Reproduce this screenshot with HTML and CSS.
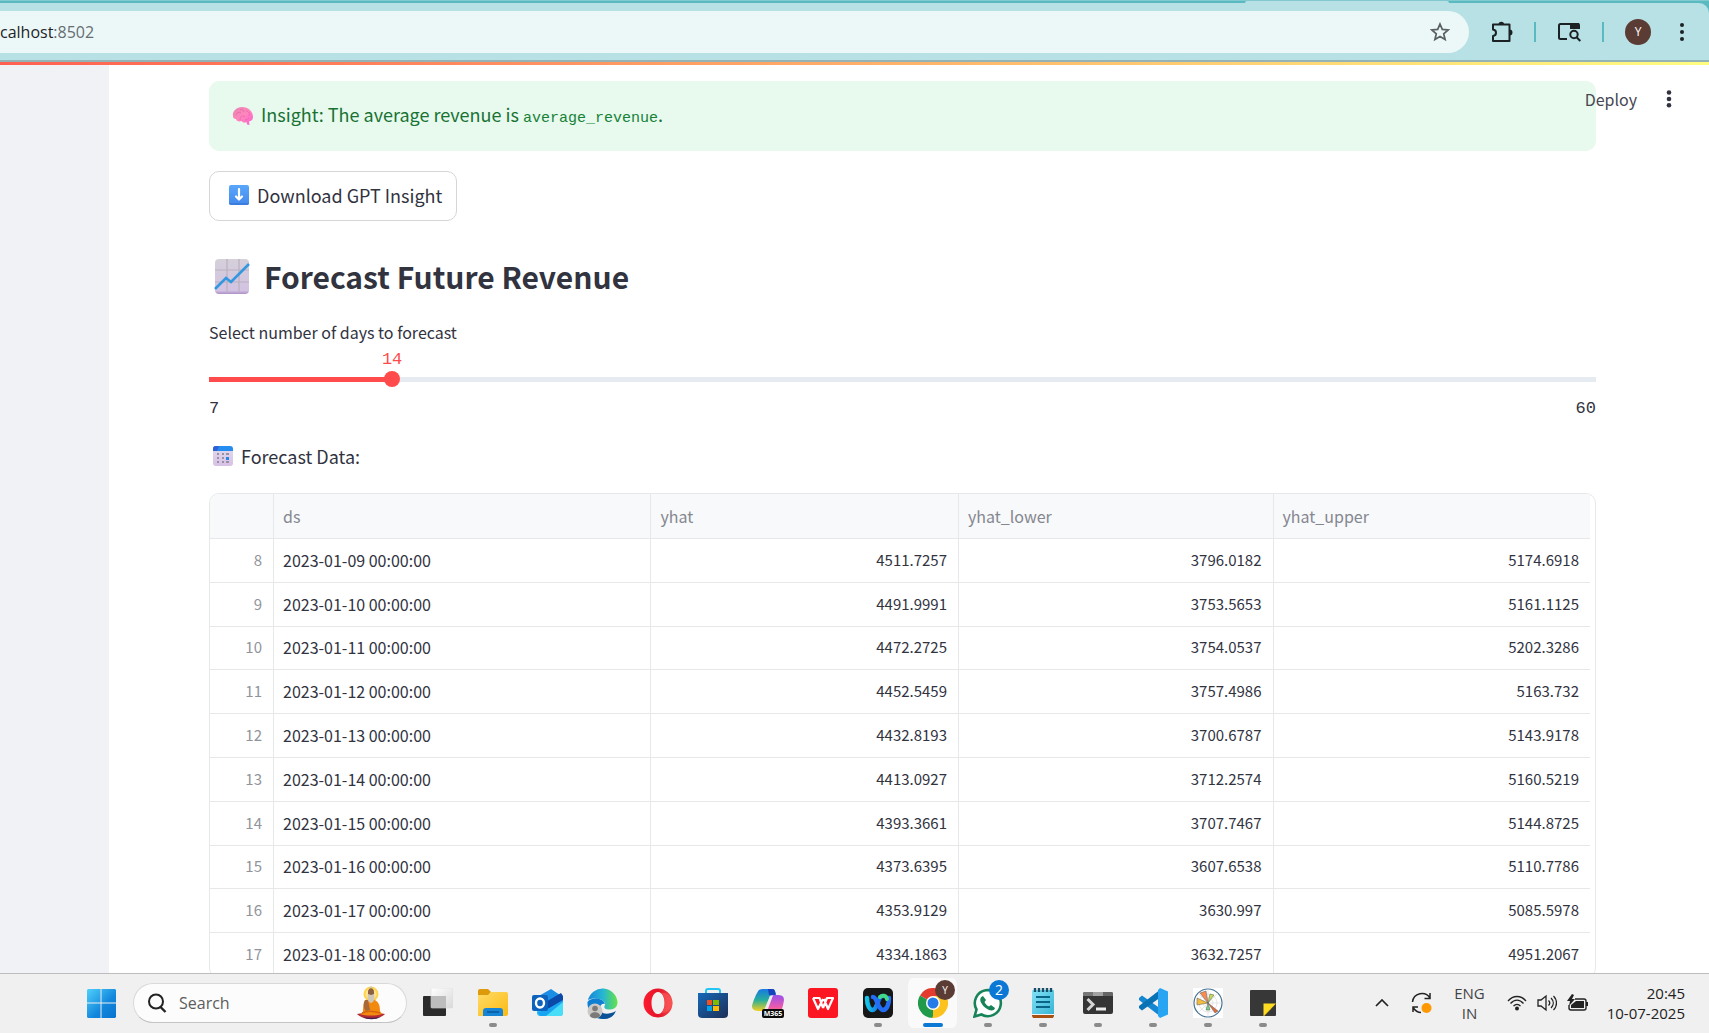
FILE: index.html
```html
<!DOCTYPE html>
<html lang="en">
<head>
<meta charset="utf-8">
<title>Forecast Future Revenue</title>
<link rel="stylesheet" href="styles.css">
</head>
<body>
<div class="screen">
  <header class="browser">
    <div class="tab-edge"><div class="active-tab"></div></div>
    <div class="toolbar">
      <div class="omnibox">
        <span class="url">calhost<span class="port">:8502</span></span>
        <button class="icon-button" aria-label="Bookmark this page"><svg width="20" height="20" viewBox="0 0 20 20"><path d="M10 2l2.3 5.4 5.9.5-4.500 3.900 1.400 5.700-5.100-3.100-5.100 3.100 1.400-5.700-4.500-3.900 5.900-.5z" fill="none" stroke="#5b6062" stroke-width="1.700"/></svg></button>
      </div>
      <button class="icon-button ext" aria-label="Extensions"><svg width="22" height="22" viewBox="0 0 22 22"><path d="M2 3.500h16.500v16.500H2v-5c4-.5 4-6 0-6.500z" fill="none" stroke="#1c2224" stroke-width="2" stroke-linejoin="round"/><path d="M7.500 3.500a2.800 2.800 0 0 1 5.600 0zM18.500 8.500a2.800 2.800 0 0 1 0 6z" fill="#1c2224"/></svg></button>
      <span class="divider"></span>
      <button class="icon-button" aria-label="Search tabs"><svg width="24" height="24" viewBox="0 0 24 24"><path d="M10 19H3.500A1.500 1.500 0 0 1 2 17.500v-12A1.500 1.500 0 0 1 3.500 4H21v5" fill="none" stroke="#1c2224" stroke-width="2"/><path d="M13 3h8a2 2 0 0 1 2 2v4H13z" fill="#1c2224"/><circle cx="17" cy="14.500" r="3.700" fill="#b7e1e4" stroke="#1c2224" stroke-width="2"/><path d="M19.600 17.200l3.700 3.800" stroke="#1c2224" stroke-width="2"/></svg></button>
      <span class="divider"></span>
      <button class="avatar" aria-label="Profile">Y</button>
      <button class="icon-button" aria-label="Browser menu"><svg width="8" height="22" viewBox="0 0 8 22"><g fill="#1c2224"><circle cx="4" cy="4" r="2"/><circle cx="4" cy="11" r="2"/><circle cx="4" cy="18" r="2"/></g></svg></button>
    </div>
  </header>

  <div class="app">
    <aside class="sidebar"></aside>
    <div class="decoration"></div>
    <div class="app-menu">
      <button class="deploy">Deploy</button>
      <button class="icon-button" aria-label="App menu"><svg width="8" height="20" viewBox="0 0 8 20"><g fill="#31333f"><circle cx="4" cy="3.500" r="2.300"/><circle cx="4" cy="10" r="2.300"/><circle cx="4" cy="16.300" r="2.300"/></g></svg></button>
    </div>
    <main class="content">
      <div class="alert">
        <svg width="22" height="20" viewBox="0 0 22 20"><defs><linearGradient id="brain" x1="0" x2="1" y1="0" y2="1"><stop offset="0" stop-color="#e884b0"/><stop offset=".5" stop-color="#ff86bd"/><stop offset="1" stop-color="#ff5fd0"/></linearGradient></defs><path d="M1 10C0 5 5 1 10 1c6 0 11 4 11 10 0 3-2 4-4 4.500L17.500 19 15 18.500 14.500 16c-2 1-4 .5-5-1-3 1-5 0-5.500-2C2 13 1 12 1 10z" fill="url(#brain)"/><path d="M4 9c1-3 4-3 5-2M8 4c2-1 4 0 4 2M8 14c0-4 3-5 5-3m1-6c3 0 4 3 3 5m-4 4c2 0 3-1 4-2" fill="none" stroke="#e565a6" stroke-width=".8"/></svg>
        <p>Insight: The average revenue is <code>average_revenue</code>.</p>
      </div>
      <button class="download">
        <svg width="20" height="20" viewBox="0 0 20 20"><defs><linearGradient id="dl" x2="0" y2="1"><stop offset="0" stop-color="#59a7fb"/><stop offset="1" stop-color="#4389ec"/></linearGradient></defs><rect width="20" height="20" rx="2" fill="url(#dl)"/><path d="M0 18h20a2 2 0 0 1-2 2H2a2 2 0 0 1-2-2z" fill="#3877d5" opacity=".7"/><path d="M10 4v10M7 11.500l3 3 3-3" fill="none" stroke="#fff" stroke-width="2.200" stroke-linecap="round" stroke-linejoin="round"/></svg>
        Download GPT Insight
      </button>
      <h2 class="title">
        <svg width="36" height="36" viewBox="0 0 36 36"><defs><linearGradient id="ch" x2="0" y2="1"><stop offset="0" stop-color="#d5d0da"/><stop offset=".9" stop-color="#d3c3e2"/><stop offset="1" stop-color="#ae90c8"/></linearGradient></defs><rect x="1" y="1" width="34" height="35" rx="4" fill="url(#ch)"/><path d="M13 1v34M25 1v34M1 12h34M1 24h34" stroke="#b9b0c0" stroke-width="1.200"/><path d="M1 31l11-11 5 4L35 6" fill="none" stroke="#3398df" stroke-width="2.600"/></svg>
        Forecast Future Revenue
      </h2>
      <label class="slider-label" for="days">Select number of days to forecast</label>
      <div class="slider">
        <div class="value-rail"><output class="value" for="days" style="left:13.2%">14</output></div>
        <input class="range" id="days" type="range" min="7" max="60" value="14">
        <div class="ticks"><span>7</span><span>60</span></div>
      </div>
      <p class="caption">
        <svg width="20" height="20" viewBox="0 0 20 20"><defs><linearGradient id="cal" x2="0" y2="1"><stop offset="0" stop-color="#e2dcec"/><stop offset="1" stop-color="#d8c0e6"/></linearGradient></defs><rect width="20" height="20" rx="3" fill="url(#cal)"/><path d="M0 5V3a3 3 0 0 1 3-3h14a3 3 0 0 1 3 3v2z" fill="#258cf0"/><path d="M0 5V3a3 3 0 0 1 3-3h3L4 5z" fill="#315fd6"/><g fill="#9a90a6"><path d="M4 7h2v2H4zM9 7h2v2H9zM13 7h3v2h-3zM4 11h2v2H4zM9 11h2v2H9zM4 15h2v2H4zM9 15h2v2H9zM13 15h3v2h-3z"/></g><path d="M13 11h3v3h-3z" fill="#2387ea"/></svg>
        Forecast Data:
      </p>
      <div class="grid">
        <table>
          <colgroup><col class="c-index"><col class="c-ds"><col class="c-yhat"><col class="c-lower"><col class="c-upper"></colgroup>
          <thead><tr><th></th><th>ds</th><th>yhat</th><th>yhat_lower</th><th>yhat_upper</th></tr></thead>
          <tbody>
            <tr><td>8</td><td>2023-01-09 00:00:00</td><td>4511.7257</td><td>3796.0182</td><td>5174.6918</td></tr>
            <tr><td>9</td><td>2023-01-10 00:00:00</td><td>4491.9991</td><td>3753.5653</td><td>5161.1125</td></tr>
            <tr><td>10</td><td>2023-01-11 00:00:00</td><td>4472.2725</td><td>3754.0537</td><td>5202.3286</td></tr>
            <tr><td>11</td><td>2023-01-12 00:00:00</td><td>4452.5459</td><td>3757.4986</td><td>5163.732</td></tr>
            <tr><td>12</td><td>2023-01-13 00:00:00</td><td>4432.8193</td><td>3700.6787</td><td>5143.9178</td></tr>
            <tr><td>13</td><td>2023-01-14 00:00:00</td><td>4413.0927</td><td>3712.2574</td><td>5160.5219</td></tr>
            <tr><td>14</td><td>2023-01-15 00:00:00</td><td>4393.3661</td><td>3707.7467</td><td>5144.8725</td></tr>
            <tr><td>15</td><td>2023-01-16 00:00:00</td><td>4373.6395</td><td>3607.6538</td><td>5110.7786</td></tr>
            <tr><td>16</td><td>2023-01-17 00:00:00</td><td>4353.9129</td><td>3630.997</td><td>5085.5978</td></tr>
            <tr><td>17</td><td>2023-01-18 00:00:00</td><td>4334.1863</td><td>3632.7257</td><td>4951.2067</td></tr>
          </tbody>
        </table>
      </div>
    </main>
  </div>

  <footer class="taskbar">
    <button class="start" aria-label="Start"><svg width="29" height="29" viewBox="0 0 30 30"><defs><linearGradient id="win" x2="1" y2="1"><stop offset="0" stop-color="#4fd0fb"/><stop offset=".6" stop-color="#1286dc"/><stop offset="1" stop-color="#0873cf"/></linearGradient></defs><path d="M1 0h13v14H0V1zM15 0h14l1 1v13H15zM0 15h14v15H1l-1-1zM15 15h15v14l-1 1H15z" fill="url(#win)"/></svg></button>
    <div class="search">
      <svg width="20" height="20" viewBox="0 0 20 20"><circle cx="9" cy="8.500" r="7" fill="none" stroke="#222" stroke-width="2"/><path d="M13.500 14l5 5" stroke="#222" stroke-width="2.400"/></svg>
      <input type="text" placeholder="Search" aria-label="Search">
      <svg width="30" height="34" viewBox="0 0 30 34"><circle cx="15" cy="8" r="7.500" fill="#ffd34d"/><circle cx="15" cy="8" r="5.500" fill="#ffe58c"/><path d="M1 28c4-1 8-1 14-1s10 0 14 1c-3 3-8 5-14 5S4 31 1 28z" fill="#b52b35"/><path d="M7 31c4 1 12 1 17 0-4 3-13 3-17 0z" fill="#402050"/><path d="M7 27c0-9 1-13 8-14 7 1 9 5 9 12l2 3c-6 2-16 2-22 0z" fill="#f38a10"/><path d="M9 14c-2 3-2 8 1 11l4-1-2-10z" fill="#a8693a"/><path d="M12 6c0-5 6-5 6 0v4l-1 2h-4l-1-2z" fill="#8e6043"/><path d="M12 8l3 1 3-1c1 5 0 8-3 9-3-1-4-4-3-9zM13 2c1-2 3-2 4 0z" fill="#cfc8b8"/><path d="M6 27c6-3 12-2 18 0" fill="none" stroke="#d8650a" stroke-width="1.500"/></svg>
    </div>
    <nav class="apps" aria-label="Pinned apps">
      <button aria-label="Task view"><svg width="30" height="30" viewBox="0 0 30 30"><defs><linearGradient id="tv" x2="1" y2="1"><stop offset="0" stop-color="#fff"/><stop offset="1" stop-color="#d9d9d9"/></linearGradient></defs><rect x="0" y="8" width="23" height="20" rx="1" fill="#2b2b2b"/><rect x="8" y="0" width="22" height="20" rx="1" fill="url(#tv)" stroke="#ddd" stroke-width=".6"/><path d="M8 8h15v12H8z" fill="#bdbdbd"/></svg></button>
      <button class="running" aria-label="File Explorer"><svg width="30" height="30" viewBox="0 0 30 30"><defs><linearGradient id="fo" x2="1" y2="1"><stop offset="0" stop-color="#ffdc67"/><stop offset="1" stop-color="#fbb914"/></linearGradient></defs><path d="M0 3a2 2 0 0 1 2-2h8l3 3-3 4H0z" fill="#dd9b0c"/><path d="M0 7h10l3-3h15a2 2 0 0 1 2 2v20a2 2 0 0 1-2 2H0z" fill="url(#fo)"/><path d="M5 28v-5a3 3 0 0 1 3-3h14a3 3 0 0 1 3 3v5z" fill="#1684d5"/><path d="M9 24h12" stroke="#0a579b" stroke-width="1.500"/></svg></button>
      <button aria-label="Outlook"><svg width="32" height="30" viewBox="0 0 32 30"><path d="M5 9L19 1l12 8-14 12z" fill="#1a8ee5"/><path d="M31 8v17a3 3 0 0 1-3 3H8a3 3 0 0 1-3-3v-4z" fill="#3ec7f6"/><path d="M12 15L29 5l2 3v5L14 22z" fill="#0b4aa8"/><path d="M31 12v5L14 28H8l-3-4 9-2z" fill="#18a4f0"/><path d="M31 14v11a3 3 0 0 1-3 3H14z" fill="#4addf8"/><rect x="0" y="7" width="16" height="16" rx="2" fill="#0c62bd"/><ellipse cx="8" cy="15" rx="4" ry="4.500" fill="none" stroke="#fff" stroke-width="2.400"/></svg></button>
      <button aria-label="Edge"><svg width="31" height="31" viewBox="0 0 31 31"><defs><linearGradient id="ed"><stop offset="0" stop-color="#1687d9"/><stop offset=".5" stop-color="#25b5d5"/><stop offset="1" stop-color="#65e344"/></linearGradient></defs><path d="M1 12A15 15 0 0 1 30.500 14c0 6-4 7.500-9 7.500-4 0-5-2-3.500-4.500 1-4-7-9-17-5z" fill="url(#ed)"/><path d="M.5 14C3 9 16 9 18 16c-6-2-7 8 1 11 3 1 6 .5 9-2-3 5-8 6-12.500 6C6 31 0 23 .5 14z" fill="#0e7fd2"/><path d="M12 16c-3 8 6 13 17 7-4 8-11 9-17 7-5-3-5-11 0-14z" fill="#0c5196"/><circle cx="8" cy="23" r="7.500" fill="#cbc9c7"/><circle cx="8" cy="20.500" r="2.800" fill="#7c7a78"/><path d="M3 28c0-5 10-5 10 0-2 3-8 3-10 0z" fill="#7c7a78"/></svg></button>
      <button aria-label="Opera"><svg width="30" height="30" viewBox="0 0 30 30"><defs><linearGradient id="op"><stop offset="0" stop-color="#ff1b2d"/><stop offset=".5" stop-color="#e4132a"/><stop offset="1" stop-color="#f14848"/></linearGradient></defs><path fill="url(#op)" fill-rule="evenodd" d="M15 .5a14.500 14.500 0 1 0 0 29 14.500 14.500 0 0 0 0-29zm0 3.500c4 0 6.500 5 6.500 11S19 26 15 26 8.500 21 8.500 15 11 4 15 4z"/><path d="M18 5c5 3 5 17 0 20 6 1 11-5 11.500-10C29 9 24 4 18 5z" fill="#ff6060" opacity=".55"/></svg></button>
      <button aria-label="Microsoft Store"><svg width="30" height="30" viewBox="0 0 30 30"><defs><linearGradient id="st" x2="1" y2="1"><stop offset="0" stop-color="#1569b8"/><stop offset="1" stop-color="#1d2f57"/></linearGradient></defs><path d="M8 6V3a2 2 0 0 1 2-2h10a2 2 0 0 1 2 2v3" fill="none" stroke="#22c5f4" stroke-width="2"/><path d="M0 5h30v21a4 4 0 0 1-4 4H4a4 4 0 0 1-4-4z" fill="url(#st)"/><path d="M9 12h5v5H9z" fill="#f25022"/><path d="M15 12h6v5h-6z" fill="#7fba00"/><path d="M9 18h5v5H9z" fill="#00a4ef"/><path d="M15 18h6v5h-6z" fill="#ffb900"/></svg></button>
      <button aria-label="Microsoft 365 Copilot"><svg width="32" height="30" viewBox="0 0 32 30"><defs><linearGradient id="m1" x2="0" y2="1"><stop offset="0" stop-color="#1978e5"/><stop offset=".5" stop-color="#26ae9c"/><stop offset="1" stop-color="#f5cf1e"/></linearGradient><linearGradient id="m2" x2="0" y2="1"><stop offset="0" stop-color="#9950ed"/><stop offset=".6" stop-color="#ef5ba8"/><stop offset="1" stop-color="#ffa34c"/></linearGradient></defs><path d="M7 2c1-1 3-1 5-1h8c3 0 3 2 4 5l-6 2-5 12c-1 3-3 3-5 3-5 0-8-1-8-5C1 13 5 4 7 2z" fill="url(#m1)"/><path d="M16 1h4c3 0 3 3 4 6h-7z" fill="#1742bd"/><path d="M19 8c1-1 3-1 5-1 6 0 8 1 8 5-1 7-3 14-7 16H13c3-5 4-16 6-20z" fill="url(#m2)"/><path d="M18 8l3-.5-6 16-3 .5z" fill="#efe8ef"/><rect x="10" y="21" width="22" height="9" rx="2" fill="#0a0a0a"/><text x="21" y="28" text-anchor="middle" class="m365">M365</text></svg></button>
      <button aria-label="WPS Office"><svg width="30" height="30" viewBox="0 0 30 30"><rect width="30" height="30" rx="3" fill="#fc1622"/><path d="M5 10h6.500l3.500 10M5 10l5 11 5-10M15 20l4-10h6L20 21l-4-10" fill="none" stroke="#fff" stroke-width="2.200" stroke-linejoin="round"/></svg></button>
      <button class="running" aria-label="Webex"><svg width="30" height="30" viewBox="0 0 30 30"><defs><linearGradient id="wx"><stop offset="0" stop-color="#14c5e8"/><stop offset="1" stop-color="#1757ec"/></linearGradient></defs><rect width="30" height="30" rx="5" fill="#171717"/><path d="M4 10c0 8 3 12 5.500 12S14 17 15 14s3-6 5-6" fill="none" stroke="url(#wx)" stroke-width="4.500" stroke-linecap="round"/><path d="M10 9c4 0 5 13 10 13 4 0 6-6 6-12" fill="none" stroke="#236cf4" stroke-width="4.500" stroke-linecap="round"/><path d="M17 9c2-2 6-2 7 2" fill="none" stroke="#41d889" stroke-width="4" stroke-linecap="round"/></svg></button>
      <button class="running active" aria-label="Chrome"><svg width="30" height="30" viewBox="0 0 30 30"><path d="M15 15L2 7.500A15 15 0 0 1 28 7.500z" fill="#e33b2e"/><path d="M15 15L28 7.500A15 15 0 0 1 15 30z" fill="#fcc31e"/><path d="M15 15l0 15A15 15 0 0 1 2 7.500z" fill="#219b4b"/><path d="M15 8h13L21 19l-6 11h-1l4-8z" fill="#fcc31e"/><circle cx="15" cy="15" r="7" fill="#fff"/><circle cx="15" cy="15" r="5.500" fill="#267be9"/></svg><span class="badge brown">Y</span></button>
      <button class="running" aria-label="WhatsApp"><svg width="30" height="30" viewBox="0 0 30 30"><path d="M1.500 28.500l2-7a13 13 0 1 1 5 5z" fill="#fff" stroke="#168358" stroke-width="2.600"/><path d="M10 8l3 4-1.500 2c1 2 2.500 3.500 4.500 4.500l2-1.500 4 3c-1 3-4 3-7 1.500-4-2-6-5-7.500-8-.8-3 .5-5 2.500-5.500z" fill="#168358"/></svg><span class="badge blue">2</span></button>
      <button class="running" aria-label="Notepad"><svg width="24" height="30" viewBox="0 0 24 30"><defs><linearGradient id="np" x2="1" y2="1"><stop offset="0" stop-color="#83e2f7"/><stop offset="1" stop-color="#36b4d2"/></linearGradient></defs><path d="M1 26h22v2l-1 2H2l-1-2z" fill="#a75010"/><rect x="1" y="2" width="22" height="25" rx="1" fill="url(#np)"/><path d="M1 26h22v1H1z" fill="#f3f3f3"/><path d="M5 9h14M5 14h14M5 19h14" stroke="#096487" stroke-width="2"/><path d="M4 0v4M8 0v4M12 0v4M16 0v4M20 0v4" stroke="#17506b" stroke-width="2.400"/></svg></button>
      <button class="running" aria-label="Terminal"><svg width="30" height="30" viewBox="0 0 30 30"><rect y="4" width="30" height="22" rx="2" fill="#353535"/><path d="M0 8V6a2 2 0 0 1 2-2h8v4z" fill="#777"/><path d="M10 4h10v4H10z" fill="#a2a2a2"/><path d="M20 4h8a2 2 0 0 1 2 2v2H20z" fill="#666"/><path d="M4.500 11l5.500 5.500L4.500 22" fill="none" stroke="#d5d5d5" stroke-width="3"/><path d="M13 21h10" stroke="#eee" stroke-width="3"/></svg></button>
      <button class="running" aria-label="Visual Studio Code"><svg width="30" height="30" viewBox="0 0 30 30"><path d="M1 10l3-2.500L23 21v8L1 12z" fill="#1587d2"/><path d="M1 20l3 2.500L23 9V1L1 18z" fill="#0872b5"/><path d="M22 0l8 3.500v23L22 30l-2-2V2z" fill="#27a5f2"/></svg></button>
      <button class="running" aria-label="Matplotlib figure"><svg width="30" height="30" viewBox="0 0 30 30"><path d="M0 0h30v30H0z" fill="#fff"/><circle cx="15" cy="15" r="14" fill="none" stroke="#406f91" stroke-width="1.200"/><g fill="none" stroke="#ccc" stroke-width=".5"><circle cx="15" cy="15" r="9"/><circle cx="15" cy="15" r="5"/><path d="M1 15h28M15 1v28M5 5l20 20M25 5L5 25"/></g><g stroke="#555" stroke-width=".5"><path d="M15 15L7 5l6-2z" fill="#fa8b51"/><path d="M15 15L4 10v7z" fill="#f5bd3d"/><path d="M15 15l2-9 4 1z" fill="#c5dd50"/><path d="M15 15l10 8-3 2z" fill="#dd6b3d"/><path d="M15 15l-2 7h4z" fill="#70d88b"/></g></svg></button>
      <button class="running" aria-label="Sticky Notes"><svg width="26" height="26" viewBox="0 0 26 26"><rect width="26" height="26" rx="1" fill="#373737"/><path d="M13.500 13.500H26L14 26h-.5z" fill="#ffdc21"/><path d="M26 13.500L13.500 26H14z" fill="#d8a600"/></svg></button>
    </nav>
    <div class="tray">
      <button class="chevron" aria-label="Show hidden icons"><svg width="14" height="8" viewBox="0 0 14 8"><path d="M1 7l6-6 6 6" fill="none" stroke="#222" stroke-width="1.700"/></svg></button>
      <button class="sync" aria-label="Update available"><svg width="22" height="22" viewBox="0 0 22 22"><path d="M1.500 10A9.500 9.500 0 0 1 19 6M19 1v5.500h-5.500M2 20v-5h5M2 15.500c2 3 5 5 8 5" fill="none" stroke="#222" stroke-width="1.500"/><circle cx="15.500" cy="16" r="5" fill="#ff9800"/></svg></button>
      <button class="lang">ENG<br>IN</button>
      <button class="status" aria-label="Network, volume, battery">
        <svg width="20" height="16" viewBox="0 0 20 16"><g fill="none" stroke="#222" stroke-width="1.300"><path d="M1 6c5-6 13-6 18 0M3.500 8.500c4-4.500 9-4.500 13 0M6.500 11.200c2-2.400 5-2.400 7 0"/></g><circle cx="10" cy="13.500" r="2" fill="#222"/></svg>
        <svg width="20" height="18" viewBox="0 0 20 18"><g fill="none" stroke="#222" stroke-width="1.300"><path d="M1 6h3l5-4v14l-5-4H1zM11.500 6.500c1.500 1.500 1.500 3.500 0 5M14 4c3 3 3 7 0 10M16.500 2c4 4 4 10 0 14"/></g></svg>
        <svg width="22" height="18" viewBox="0 0 22 18"><path d="M8 5h9a2 2 0 0 1 2 2v7a2 2 0 0 1-2 2H4a2 2 0 0 1-2-2v-3" fill="none" stroke="#222" stroke-width="1.400"/><path d="M9 7h8v7H4v-3z" fill="#222"/><path d="M19 8h2v4h-2zM5 0L0 7h3l-1 5 6-7H5l2-4z" fill="#222"/></svg>
      </button>
      <div class="clock"><time>20:45</time><time>10-07-2025</time></div>
    </div>
  </footer>
</div>
</body>
</html>
```
FILE: styles.css
```css
* { box-sizing: border-box; }

body {
  margin: 0;
  color: #31333f;
  background: #fff;
  font-family: "Noto Sans CJK SC", "Noto Sans", sans-serif;
}

button {
  padding: 0;
  border: 0;
  background: none;
  color: inherit;
  font: inherit;
}

svg { display: block; flex: none; }
p, h2 { margin: 0; }

.screen {
  display: flex;
  flex-direction: column;
  height: 100vh;
  overflow: hidden;
}

/* Browser chrome */
.browser {
  flex: none;
  background: #5ab9c1;
  border-bottom: 2px solid #94b3b7;
  font-family: "Open Sans", sans-serif;
}

.tab-edge {
  height: 3px;
  padding-right: 260px;
  border-top: 1px solid #7fc9cf;
}

.active-tab {
  width: 204px;
  height: 2px;
  margin-left: auto;
  border-radius: 8px 8px 0 0;
  background: #b7e1e4;
}

.toolbar {
  display: flex;
  align-items: center;
  height: 57px;
  padding: 0 23px 0 0;
  border-top-right-radius: 10px;
  background: #b7e1e4;
}

.omnibox {
  display: flex;
  flex: 1;
  align-items: center;
  justify-content: space-between;
  height: 42px;
  padding-right: 19px;
  border-radius: 0 21px 21px 0;
  background: #ecf8f8;
}

.url { color: #1d2426; font-size: 16px; }
.port { color: #666d70; }
.icon-button { display: flex; }
.ext { margin-left: 22px; }

.divider {
  width: 2px;
  height: 20px;
  margin: 0 21px;
  background: #5ab9c1;
}

.avatar {
  width: 26px;
  height: 26px;
  margin-right: 27px;
  border-radius: 50%;
  background: #5b3c34;
  color: #fff;
  font-size: 12px;
}

/* Dashboard */
.app {
  position: relative;
  display: flex;
  flex: 1;
  min-height: 0;
  overflow: hidden;
}

.sidebar { flex: none; width: 109px; background: #f0f2f6; }

.decoration {
  position: absolute;
  inset: 0 0 auto;
  height: 3px;
  background: linear-gradient(90deg, #ff5f51, #fffd80);
}

.app-menu {
  position: absolute;
  top: 25px;
  right: 36px;
  display: flex;
  align-items: center;
  gap: 28px;
}

.deploy { color: #464853; font-size: 16px; line-height: 24px; }

.content {
  flex: 1;
  min-width: 0;
  padding: 19px 113px 0 100px;
}

.alert {
  display: flex;
  align-items: center;
  gap: 7px;
  height: 70px;
  padding: 0 23px;
  border-radius: 10px;
  background: #e8f9ee;
  color: #177233;
  font-size: 18px;
  line-height: 28px;
}

.alert code {
  color: #158237;
  font-family: "Liberation Mono", monospace;
  font-size: 15px;
}

.download {
  display: flex;
  align-items: center;
  gap: 8px;
  height: 50px;
  margin-top: 20px;
  padding: 0 14px 2px 19px;
  border: 1px solid #d6d6d9;
  border-radius: 10px;
  font-size: 18px;
}

.title {
  display: flex;
  align-items: center;
  gap: 14px;
  height: 56px;
  margin-top: 27px;
  padding-left: 5px;
  font-size: 30px;
  font-weight: 600;
}

.slider-label {
  display: block;
  margin-top: 16px;
  font-size: 16px;
  line-height: 24px;
}

.slider { font-family: "Liberation Mono", monospace; font-size: 17px; }
.value-rail { position: relative; height: 27px; }

.value {
  position: absolute;
  top: 4px;
  color: #ff4b4b;
  line-height: 24px;
  transform: translateX(-50%);
}

/* The rail overhangs by half a thumb so that the thumb reaches both ends. */
.range {
  display: block;
  width: calc(100% + 16px);
  height: 16px;
  margin: 0 -8px;
  appearance: none;
  background: none;
}

.range::-webkit-slider-runnable-track {
  height: 5px;
  background: linear-gradient(90deg, #ff4b4b 13.2%, #e6eaf1 13.2%) 8px 0 / calc(100% - 16px) 5px no-repeat;
}

.range::-webkit-slider-thumb {
  width: 16px;
  height: 16px;
  margin-top: -6px;
  border-radius: 50%;
  appearance: none;
  background: #ff4b4b;
}

.ticks {
  display: flex;
  justify-content: space-between;
  margin-top: 10px;
  line-height: 24px;
}

.caption {
  display: flex;
  align-items: center;
  gap: 8px;
  margin: 21px 0 23px;
  padding-left: 4px;
  font-size: 18px;
  line-height: 28px;
}

.grid {
  padding-right: 5px;
  overflow: hidden;
  border: 1px solid #e7e8ea;
  border-radius: 10px;
}

table {
  width: 100%;
  height: 483px;
  table-layout: fixed;
  border-collapse: separate;
  border-spacing: 0;
  font-size: 15px;
  line-height: 24px;
}

.c-index { width: 64px; }
.c-ds { width: 27.35%; }
.c-yhat { width: 22.29%; }
.c-lower { width: 22.79%; }

th, td {
  height: 43px;
  padding: 0 11px 1px 9px;
  border-right: 1px solid #e7e8ea;
  border-bottom: 1px solid #e7e8ea;
  text-align: right;
}

th {
  height: 45px;
  background: #f8f9fb;
  color: #85878f;
  font-size: 16px;
  font-weight: 400;
  text-align: left;
}

td:nth-child(2) { font-size: 16px; text-align: left; }
td:first-child { color: #92949b; }
th:last-child, td:last-child { border-right: 0; }

/* Taskbar */
.taskbar {
  display: flex;
  flex: none;
  align-items: center;
  height: 60px;
  padding: 0 24px 1px 87px;
  border-top: 1px solid #bdbdbd;
  background: #f0f0f0;
  color: #222;
  font-family: "Open Sans", sans-serif;
  font-size: 15px;
}

.search {
  display: flex;
  align-items: center;
  width: 274px;
  height: 40px;
  margin: 0 3px 0 17px;
  padding: 0 20px 0 13px;
  border: 1px solid #d9d9d9;
  border-bottom-color: #c4c4c4;
  border-radius: 20px;
  background: #fcfcfc;
}

.search input {
  flex: 1;
  min-width: 0;
  padding: 0 12px;
  border: 0;
  background: none;
  font: 16px "Open Sans", sans-serif;
}

.search input::placeholder { color: #5c5c5c; }
.apps { display: flex; }

.apps button {
  position: relative;
  display: flex;
  align-items: center;
  justify-content: center;
  width: 55px;
  height: 50px;
}

.running::after {
  content: "";
  position: absolute;
  bottom: 1px;
  width: 8px;
  height: 4px;
  border-radius: 2px;
  background: #8b8b8b;
}

.apps .active {
  border: solid #f0f0f0;
  border-width: 0 3px;
  border-radius: 8px;
  background: #fafafa;
}

.active::after { width: 20px; background: #0a78d4; }

.badge {
  position: absolute;
  top: 2px;
  right: 2px;
  width: 20px;
  height: 20px;
  border-radius: 50%;
  color: #fff;
  font-size: 14px;
  line-height: 20px;
}

.brown { background: #5b3c34; font-size: 10px; }
.blue { right: 6px; background: #0a78d4; }
.m365 { fill: #fff; font: bold 7px "Open Sans", sans-serif; }

.tray {
  display: flex;
  align-items: center;
  margin-left: auto;
}

.chevron { margin-right: 22px; }
.sync { margin-right: 21px; }
.lang { margin-right: 22px; color: #444; line-height: 20px; }
.status { display: flex; align-items: center; gap: 10px; }

.clock {
  display: flex;
  flex-direction: column;
  align-items: flex-end;
  margin-left: 18px;
  line-height: 20px;
}
```
